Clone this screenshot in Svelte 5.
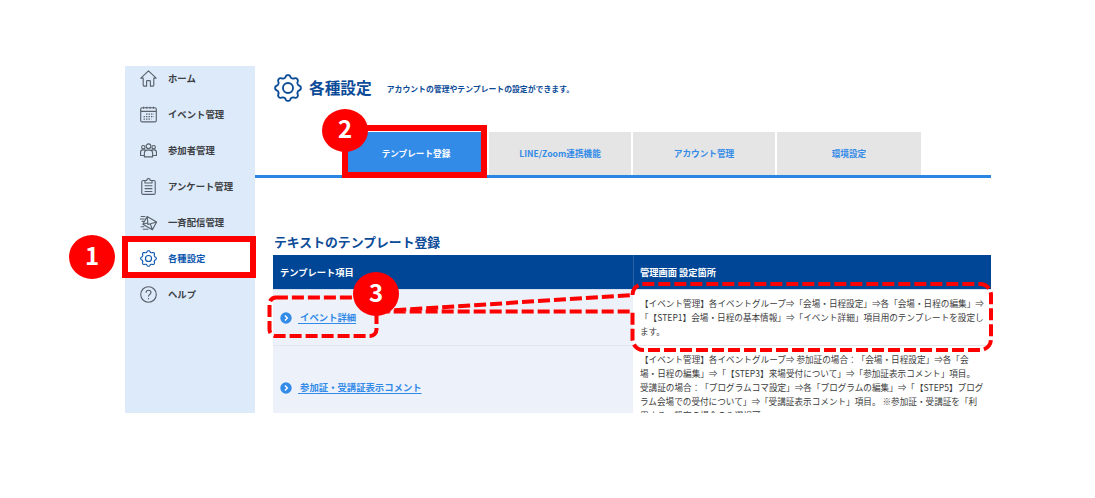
<script lang="ts">
  const menu = [
    { icon: 'home', label: 'ホーム' },
    { icon: 'calendar', label: 'イベント管理' },
    { icon: 'people', label: '参加者管理' },
    { icon: 'clipboard', label: 'アンケート管理' },
    { icon: 'mail', label: '一斉配信管理' },
    { icon: 'gear', label: '各種設定', active: true },
    { icon: 'help', label: 'ヘルプ' },
  ];

  const tabs = ['テンプレート登録', 'LINE/Zoom連携機能', 'アカウント管理', '環境設定'];

  const rows = [
    {
      name: 'イベント詳細',
      lines: [
        '【イベント管理】各イベントグループ⇒「会場・日程設定」⇒各「会場・日程の編集」⇒',
        '「【STEP1】会場・日程の基本情報」⇒「イベント詳細」項目用のテンプレートを設定し',
        'ます。',
      ],
    },
    {
      name: '参加証・受講証表示コメント',
      lines: [
        '【イベント管理】各イベントグループ⇒ 参加証の場合：「会場・日程設定」⇒各「会',
        '場・日程の編集」⇒「【STEP3】来場受付について」⇒「参加証表示コメント」項目。',
        '受講証の場合：「プログラムコマ設定」⇒各「プログラムの編集」⇒「【STEP5】プログ',
        'ラム会場での受付について」⇒「受講証表示コメント」項目。 ※参加証・受講証を「利',
        '用する」設定の場合のみ選択可',
      ],
    },
  ];

  // eight rounded teeth around a 24x24 box
  function gearPath() {
    let d = '';
    for (let i = 0; i < 160; i++) {
      const a = (i / 160) * Math.PI * 2;
      const wave = Math.cos(a * 8);
      const r = 10 + 1.15 * Math.tanh(wave * 1.4);
      d += `${i ? 'L' : 'M'}${(12 + r * Math.cos(a)).toFixed(2)} ${(12 + r * Math.sin(a)).toFixed(2)}`;
    }
    return d + 'Z';
  }
  const gear = gearPath();
</script>

{#snippet icon(name: string)}
  <svg class="icon" viewBox="0 0 24 24">
    {#if name === 'home'}
      <path d="M4.5 11.5H1.2L12 1.2l10.8 10.3h-3.3V21q0 1.8-1.8 1.8h-3V16q0-1-1-1h-3.4q-1 0-1 1v6.8h-3Q4.5 22.8 4.5 21z" />
    {:else if name === 'calendar'}
      <rect x="1" y="2.5" width="22" height="20" rx="2" />
      <path d="M1 7.5h22M5 1v3M9.6 1v3M14.3 1v3M19 1v3" />
      <path stroke-dasharray="2 1.5" stroke-width="2" d="M8.5 11.5h11M5 15h14.5M5 18.5h11" />
    {:else if name === 'people'}
      <circle cx="12" cy="6" r="3.3" />
      <circle cx="4.7" cy="7.3" r="2.4" />
      <circle cx="19.3" cy="7.3" r="2.4" />
      <path d="M6.2 21v-5.500q0-4 4-4h3.600q4 0 4 4V21z" />
      <path d="M6 19H.8v-4.500q0-3.300 3.200-3.300h2.500q1 0 1.500.8M18 19h5.200v-4.500q0-3.300-3.200-3.300h-2.500q-1 0-1.500.8" />
    {:else if name === 'clipboard'}
      <path d="M7 3.500H4.500Q2.500 3.500 2.500 5.500v15.700q0 2 2 2h15q2 0 2-2V5.500q0-2-2-2H17" />
      <path d="M7 3.500h2.500q0-2.700 2.500-2.700t2.500 2.700H17V7H7zM6.500 11h11M6.500 15h11M6.500 19h11" />
    {:else if name === 'mail'}
      <path d="M10 3.500l13.500 7.800-6 11L4 14.500zM10 3.500l1.300 11.300 12.200-3.500M4 14.500l6.200-1.700M17.500 22.300l-3-8.300" />
      <path d="M1 3.500h6.500M0 7h6.500M2.500 10.500h3M1 18h5M4 21.500h8" />
    {:else if name === 'gear'}
      <path d={gear} />
      <circle cx="12" cy="12" r="4.3" />
    {:else}
      <circle cx="12" cy="12" r="11" />
      <path d="M8.5 9.500q0-3.500 3.500-3.500t3.500 3q0 1.600-1.800 2.900T12 15M12 17v1.700" />
    {/if}
  </svg>
{/snippet}

<div class="page">
  <div class="app">
    <nav>
      {#each menu as item}
        <a class="item" class:active={item.active} href="#top">
          {@render icon(item.icon)}
          <span>{item.label}</span>
        </a>
      {/each}
    </nav>

    <main>
      <header>
        {@render icon('gear')}
        <h1>各種設定</h1>
        <p>アカウントの管理やテンプレートの設定ができます。</p>
      </header>

      <div class="tabs">
        {#each tabs as tab, i}
          <button class:selected={i === 0}>{tab}</button>
        {/each}
      </div>

      <section>
        <h2>テキストのテンプレート登録</h2>
        <div class="row head">
          <div class="name">テンプレート項目</div>
          <div class="place">管理画面 設定箇所</div>
        </div>
        {#each rows as row}
          <div class="row">
            <div class="name">
              <svg class="arrow" viewBox="0 0 12 12">
                <circle cx="6" cy="6" r="5.7" />
                <path d="M4.9 3.5L7.4 6 4.9 8.5" />
              </svg>
              <a href="#top">&nbsp;{row.name}</a>
            </div>
            <div class="place">
              {#each row.lines as line}
                <p>{line}</p>
              {/each}
            </div>
          </div>
        {/each}
      </section>
    </main>
  </div>

  <!-- step markers and frames over the screen -->
  <svg class="guide" viewBox="0 0 1095 498">
    <rect class="frame" x="125" y="239" width="128" height="36" />
    <rect class="frame" x="345" y="128" width="139" height="47" />
    <rect class="dashed" x="269.5" y="297.5" width="107" height="38.5" rx="6.4" />
    <path
      class="dashed"
      d="M632.500 295A11 11 0 0 1 643.500 284H980A11 11 0 0 1 991 295V339A11 11 0 0 1 980 350H643.500A11 11 0 0 1 632.500 339V311.500H376Z"
    />
    <ellipse cx="92" cy="257" rx="23" ry="22" />
    <ellipse cx="345" cy="130.5" rx="23" ry="21.5" />
    <ellipse cx="376" cy="294" rx="23" ry="22" />
    <text x="92" y="265">1</text>
    <text x="345" y="138">2</text>
    <text x="376" y="302">3</text>
  </svg>
</div>

<style>
  :global(body) {
    margin: 0;
    background: #fff;
  }

  .page {
    position: relative;
    box-sizing: border-box;
    width: 1095px;
    height: 498px;
    padding: 66px 104px 85px 125px;
    overflow: hidden;
    font-family: 'Noto Sans CJK JP', sans-serif;
    text-spacing-trim: space-all;
  }

  .app {
    display: flex;
    height: 347px;
    overflow: hidden;
  }

  nav {
    width: 130px;
    flex: none;
    margin-top: -6px;
    background: #dceafa;
  }

  .item {
    display: flex;
    align-items: center;
    gap: 11px;
    height: 36px;
    padding-left: 15px;
    color: #3c4045;
    font-size: 9.35px;
    font-weight: 700;
    text-decoration: none;
  }

  .item span {
    padding-bottom: 1px;
  }

  .item.active {
    background: #fff;
    color: #0d57ad;
  }

  .icon {
    width: 17px;
    height: 17px;
    flex: none;
    fill: none;
    stroke: currentColor;
    stroke-width: 1.6;
    stroke-linejoin: round;
  }

  .item:not(.active) .icon {
    stroke: #59626b;
  }

  main {
    flex: 1;
    min-width: 0;
  }

  header {
    display: flex;
    align-items: center;
    height: 44px;
    padding-left: 19px;
    color: #0c4b98;
  }

  header .icon {
    width: 28px;
    height: 28px;
  }

  h1 {
    margin: 0 0 0 7px;
    padding-bottom: 1px;
    font-size: 15.7px;
  }

  header p {
    margin: 0 0 0 15px;
    font-size: 7.85px;
    font-weight: 700;
  }

  .tabs {
    display: flex;
    gap: 2px;
    box-sizing: border-box;
    height: 46px;
    margin-top: 22px;
    padding-left: 90px;
    border-bottom: 3px solid #2b86e3;
  }

  button {
    width: 142px;
    padding: 0 0 2px;
    border: 0;
    background: #e5e5e5;
    color: #338be8;
    font-family: inherit;
    font-size: 8.65px;
    font-weight: 700;
    text-spacing-trim: inherit;
  }

  button:last-child {
    width: 144px;
  }

  button.selected {
    background: #338be8;
    color: #fff;
  }

  section {
    padding-left: 18px;
  }

  h2 {
    margin: 54px 0 0 1px;
    height: 23px;
    color: #0c4b98;
    font-size: 12.85px;
    line-height: 19px;
  }

  .row {
    display: flex;
    border-bottom: 1px solid #e3e7ec;
  }

  .name,
  .place {
    box-sizing: border-box;
    padding: 7px 0 7px 7px;
  }

  .name {
    display: flex;
    align-items: center;
    width: 360px;
    flex: none;
    background: #ecf1fa;
    font-size: 9.35px;
    font-weight: 700;
  }

  .name a {
    margin-left: 6px;
    padding-bottom: 2px;
    color: #338be8;
    text-underline-offset: 2px;
  }

  .arrow {
    width: 12px;
    height: 12px;
    fill: #338be8;
  }

  .arrow path {
    fill: none;
    stroke: #fff;
    stroke-width: 1.4;
  }

  .place {
    flex: 1;
    min-width: 0;
    color: #3c3c3c;
    font-size: 8.62px;
    line-height: 13.8px;
    white-space: nowrap;
  }

  .place p {
    margin: 0;
  }

  .head {
    height: 34px;
    border-bottom-color: #d5e0ee;
  }

  .head .name,
  .head .place {
    background: #004696;
    color: #fff;
    font-size: 9.25px;
    font-weight: 700;
    line-height: 20px;
  }

  .head .place {
    padding-left: 6px;
    border-left: 1px solid #2c62a3;
  }

  .guide {
    position: absolute;
    inset: 0;
    width: 1095px;
    height: 498px;
    fill: #f00;
    pointer-events: none;
  }

  .frame {
    fill: none;
    stroke: #f00;
    stroke-width: 6;
  }

  .dashed {
    fill: none;
    stroke: #f00;
    stroke-width: 4;
    stroke-dasharray: 12 4;
  }

  .guide text {
    fill: #fff;
    font-size: 24px;
    font-weight: 700;
    text-anchor: middle;
  }
</style>
